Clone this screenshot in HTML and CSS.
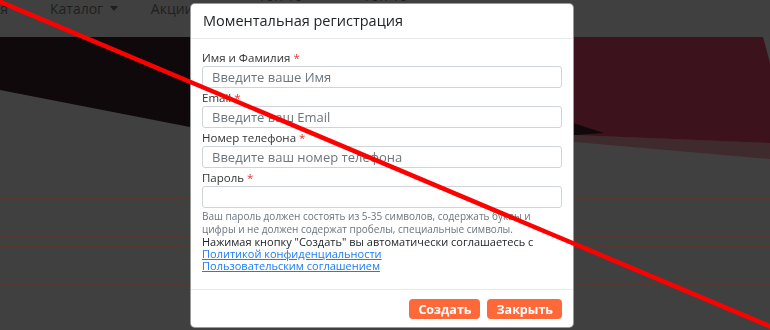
FILE: index.html
```html
<!DOCTYPE html>
<html lang="ru">
<head>
  <meta charset="UTF-8">
  <title>Моментальная регистрация</title>
  <link rel="stylesheet" href="styles.css">
</head>
<body>
  <div class="page">
    <header class="topbar">
      <nav class="nav nav-upper">
        <a href="#">Топ 10</a>
        <a href="#">Топ 10</a>
      </nav>
      <nav class="nav nav-main">
        <a href="#" class="cut">Главная</a>
        <a href="#">Каталог <span class="caret"></span></a>
        <a href="#">Акции</a>
      </nav>
    </header>

    <section class="hero">
      <svg width="770" height="122" viewBox="0 0 770 122">
        <polygon fill="#3f2a2e" points="300,95 575,98 770,106 770,122 575,105 300,102"/>
        <polygon fill="#3c131c" points="300,0 763,0 770,26 770,106 575,98 300,95"/>
        <polygon fill="#0f090c" points="0,0 560,0 573,86 604,96 575,98 190,90 0,53"/>
      </svg>
    </section>

    <section class="list">
      <div class="row"></div>
      <div class="row"></div>
    </section>
  </div>

  <div class="modal-layer">
    <div class="modal">
      <div class="modal-header">
        <h5>Моментальная регистрация</h5>
      </div>
      <form class="modal-body">
        <div class="field">
          <label>Имя и Фамилия <span class="req">*</span></label>
          <input type="text" placeholder="Введите ваше Имя">
        </div>
        <div class="field">
          <label>Email <span class="req">*</span></label>
          <input type="text" placeholder="Введите ваш Email">
        </div>
        <div class="field">
          <label>Номер телефона <span class="req">*</span></label>
          <input type="text" placeholder="Введите ваш номер телефона">
        </div>
        <div class="field">
          <label>Пароль <span class="req">*</span></label>
          <input type="password">
        </div>
        <p class="hint">Ваш пароль должен состоять из 5-35 символов, содержать буквы и цифры и не должен содержат пробелы, специальные символы.</p>
        <p class="agree">
          Нажимая кнопку "Создать" вы автоматически соглашаетесь с
          <a href="#">Политикой конфиденциальности</a>
          <a href="#">Пользовательским соглашением</a>
        </p>
      </form>
      <div class="modal-footer">
        <button type="button">Создать</button>
        <button type="button">Закрыть</button>
      </div>
    </div>
  </div>

  <!-- красная линия поверх всего -->
  <svg class="strike" width="770" height="330" viewBox="0 0 770 330">
    <line x1="-4" y1="0" x2="774" y2="328" stroke="#ff0000" stroke-width="4.5"/>
  </svg>
</body>
</html>
```

FILE: styles.css
```css
body {
  margin: 0;
  background: #404040;
  font-family: 'Open Sans', 'Liberation Sans', sans-serif;
  overflow: hidden;
}

.page {
  width: 770px;
}

.topbar {
  height: 37px;
  display: flex;
  flex-direction: column;
}

.nav {
  display: flex;
  font-size: 14px;
}

.nav a {
  color: #1f1f1f;
  text-decoration: none;
}

.nav-upper {
  height: 15px;
  line-height: 15px;
  margin-top: -12px;
  padding-left: 258px;
}

.nav-upper a {
  width: 105px;
}

.nav-main {
  height: 18px;
  line-height: 18px;
  margin-top: -3px;
  gap: 33px;
}

.nav-main .cut {
  width: 60px;
  margin-left: -52px;
  margin-right: 9px;
  text-align: right;
}

.caret {
  display: inline-block;
  margin-left: 3px;
  vertical-align: 3px;
  border-top: 5px solid #1f1f1f;
  border-left: 4px solid transparent;
  border-right: 4px solid transparent;
}

.hero {
  height: 122px;
}

.hero svg {
  display: block;
}

.list {
  padding-top: 39px;
}

.row {
  height: 37px;
  border-top: 1px solid #553a31;
  border-bottom: 1px solid #553a31;
  margin-bottom: 9px;
}

.modal-layer {
  position: fixed;
  top: 0;
  left: 0;
  right: 0;
  bottom: 0;
  padding: 3px 0 0 190px;
}

.modal {
  width: 384px;
  box-sizing: border-box;
  background: #ffffff;
  border: 1px solid rgba(0,0,0,0.4);
  border-radius: 5px;
  color: #212529;
}

.modal-header {
  padding: 0 12px 2px;
  box-sizing: border-box;
  height: 35px;
  display: flex;
  align-items: center;
  border-bottom: 1px solid #e9ecef;
}

.modal-header h5 {
  margin: 0;
  font-size: 14.5px;
  font-weight: 500;
  color: #212529;
}

.modal-body {
  padding: 11px 11px 17px;
}

.field label {
  display: block;
  font-size: 11.5px;
  line-height: 16px;
  color: #333;
}

.req {
  color: #e3342f;
}

.field input {
  display: block;
  width: 100%;
  height: 22px;
  box-sizing: border-box;
  margin: 0 0 2px;
  padding: 0 9px;
  border: 1px solid #ced4da;
  border-radius: 3px;
  font-family: inherit;
  font-size: 13px;
  color: #495057;
}

.field input::placeholder {
  color: #6c757d;
}

.hint {
  margin: 0;
  font-size: 10px;
  line-height: 13px;
  color: #6c757d;
}

.agree {
  margin: 0;
  font-size: 11px;
  line-height: 12px;
  color: #212529;
}

.agree a {
  display: block;
  color: #1e7cf2;
  text-decoration: underline;
}

.modal-footer {
  display: flex;
  justify-content: flex-end;
  gap: 7px;
  padding: 9px 11px 8px;
  border-top: 1px solid #e9ecef;
}

.modal-footer button {
  height: 20px;
  padding: 0 9px;
  border: none;
  border-radius: 4px;
  background: #ff6838;
  color: #ffffff;
  font-family: inherit;
  font-size: 12.5px;
  font-weight: bold;
  cursor: pointer;
}

.strike {
  position: fixed;
  top: 0;
  left: 0;
  pointer-events: none;
}
```
